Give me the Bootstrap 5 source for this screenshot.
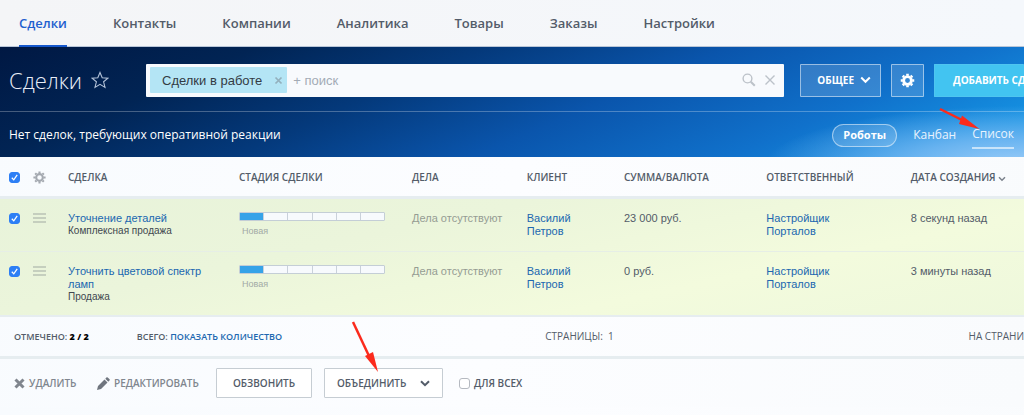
<!DOCTYPE html>
<html lang="ru">
<head>
<meta charset="utf-8">
<meta name="viewport" content="width=device-width, initial-scale=1">
<title>Сделки</title>
<link href="https://cdn.jsdelivr.net/npm/bootstrap@5.3.0/dist/css/bootstrap.min.css" rel="stylesheet">
<style>
:root { --os: "Open Sans", "Noto Sans", sans-serif; --ar: "Liberation Sans", Arial, sans-serif; --ink: #535c69; --blue: #2067b0; --edge: #e6edf0; }
body { font-family: var(--os); color: var(--ink); background: linear-gradient(100deg, #f8fbfe, #fcfdff 50%, #f9fbfd); overflow-x: hidden; }
a { text-decoration: none; }
.top-nav { height: 47px; gap: 46px; padding: 0 19px; background: linear-gradient(90deg, #f4f5f7, #f5f8fc); border-bottom: 1px solid #b9c6d8; flex-wrap: nowrap; }
.top-nav .nav-link { padding: 0; height: 47px; line-height: 46px; font-size: 13px; font-weight: 600; color: var(--ink); white-space: nowrap; }
.top-nav .nav-link.active { color: #1f60cf; border-bottom: 2px solid #1658cc; }
.hero { color: #fff; background:
  radial-gradient(ellipse 260px 60px at 100% 108%, #9dcdf8 0, rgba(125,188,244,.8) 45%, rgba(60,155,232,0) 100%),
  linear-gradient(157deg, #001843 0, #012454 20%, #04397b 38%, #0a55ac 57%, #1071cb 77%, #1592e2 93%, #1a97e6 100%); }
.hero-bar { height: 65px; padding: 2px 0 0 9px; border-bottom: 1px solid rgba(255,255,255,.27); overflow: hidden; }
.page-title { font-size: 22px; font-weight: 300; width: 137px; gap: 9px; margin: 0; color: #e8eef8; }
.search-box { height: 33px; margin-right: 16px; padding: 0 8px 0 4px; background: #f8fafd; border-radius: 1px; font: 13px var(--ar); }
.search-tag { height: 26px; padding: 0 4px 0 12px; gap: 12px; background: #b4e5f5; color: #333b44; border-radius: 1px; white-space: nowrap; }
.search-box input { font: 13px var(--ar); background: none; border: 0; outline: 0; min-width: 0; padding: 0 6px; color: var(--ink); }
.search-box input::placeholder { color: #a3abb5; opacity: 1; }
.bare { background: none; border: 0; padding: 0; line-height: 1; display: flex; color: inherit; }
.btn-glass { height: 33px; margin-right: 10px; padding: 0; border: 1px solid rgba(255,255,255,.5); border-radius: 1px; background: rgba(255,255,255,.16); color: #fff; font-size: 10px; font-weight: 700; }
.btn-add { height: 33px; width: 90px; padding: 0 0 0 18px; border: 1px solid #4fc5f0; border-right: 0; border-radius: 1px; background: #42c4f1; color: #fff; font-size: 10px; font-weight: 700; white-space: nowrap; overflow: hidden; text-align: left; }
.sub-bar { height: 45px; padding: 1px 10px 0 9px; font-size: 12px; }
.sub-bar a { color: #e9f3fd; }
.robots { height: 23px; width: 65px; padding: 0; border: 1px solid rgba(255,255,255,.5); border-radius: 12px; background: rgba(255,255,255,.14); color: #fff; font-size: 11px; font-weight: 700; }
.sub-bar .view-on { height: 27px; line-height: 24px; border-bottom: 2px solid rgba(255,255,255,.6); }
.pointer { position: absolute; pointer-events: none; }
.deals { table-layout: fixed; width: 100%; margin: 0; }
.deals th { height: 40px; padding: 2px 0 0; vertical-align: middle; font-size: 10px; line-height: 16px; font-weight: 600; white-space: nowrap; border-bottom: 3px solid var(--edge); }
.deals td { padding: 13px 0 11px; vertical-align: top; font: 11px/13px var(--ar); }
.deals tbody { background: linear-gradient(168deg, #e8f3da 0, #ebf5db 35%, #f3fbdd 70%, #eef8dc 100%); }
.deals tbody tr { border-bottom: 1px solid #e6eee6; }
.deals tbody tr:last-child { border-bottom: 2px solid var(--edge); }
.deals td a { color: var(--blue); }
.deals .row-one td { height: 54px; }
.deals .row-two td { height: 65px; }
.kind { font-size: 10px; line-height: 12px; color: #40474f; }
.deals .muted { color: #959c93; }
.tick { appearance: none; display: block; width: 11px; height: 11px; margin: 0; border-radius: 3px; border: 1px solid #b5b9c0; background-color: #fff; }
.deals td .tick { margin-top: 1px; }
.deals td .grip { display: block; margin-top: 1px; }
.tick:checked { border-color: #2d7ff5; background: #2d7ff5 url("data:image/svg+xml,%3Csvg xmlns='http://www.w3.org/2000/svg' viewBox='0 0 10 10'%3E%3Cpath d='M2 5.3 4.2 7.6 8 2.2' fill='none' stroke='white' stroke-width='1.4'/%3E%3C/svg%3E") center/100%; }
.check-cell { padding-left: 9px !important; }
.stages { width: 146px; height: 9px; border: 1px solid #c4ced6; border-radius: 1px; background: #f7fafd; }
.stages i { flex: 1; border-right: 1px solid #c9d1da; }
.stages i:first-child { background: #36a3e8; }
.stages i:last-child { border: 0; }
.stage-name { font-size: 9px; color: #a2aaa6; padding: 4px 0 0 3px; }
.totals { height: 42px; padding-left: 14px; font-size: 10px; border-bottom: 3px solid var(--edge); white-space: nowrap; overflow: hidden; }
.totals a { color: var(--blue); }
.totals .marked { flex: 0 0 52.6%; font-size: 9px; font-weight: 600; }
.actions { padding: 9px 14px; font-size: 10px; }
.actions .btn { height: 30px; padding: 0; border: 1px solid #c6cdd3; border-radius: 1px; color: var(--ink); font-size: 10px; font-weight: 600; background: #fff; }
.actions .bare { gap: 4px; align-items: center; color: #80868e; font-weight: 600; }
</style>
</head>
<body>
<nav class="nav top-nav">
  <a class="nav-link active" href="#">Сделки</a>
  <a class="nav-link" href="#">Контакты</a>
  <a class="nav-link" href="#">Компании</a>
  <a class="nav-link" href="#">Аналитика</a>
  <a class="nav-link" href="#">Товары</a>
  <a class="nav-link" href="#">Заказы</a>
  <a class="nav-link" href="#">Настройки</a>
</nav>

<header class="hero">
  <div class="hero-bar d-flex align-items-center">
    <h1 class="page-title d-flex align-items-center flex-shrink-0">Сделки
      <svg width="18" height="18" viewBox="0 0 18 18" fill="none" stroke="#b3c2d8" stroke-width="1.1"><path d="M9 1.5 11.2 6.8 16.9 7.2 12.6 10.8 14 16.4 9 13.4 4 16.4 5.4 10.8 1.1 7.2 6.8 6.8Z"/></svg>
    </h1>
    <div class="search-box d-flex align-items-center flex-grow-1">
      <span class="search-tag d-flex align-items-center">Сделки в работе
        <button class="bare" type="button" aria-label="Убрать фильтр"><svg width="9" height="9" viewBox="0 0 9 9" stroke="#93b0bd" stroke-width="1.7"><path d="m1.5 1.5 6 6m0-6-6 6"/></svg></button>
      </span>
      <input class="flex-grow-1" type="text" placeholder="+ поиск" aria-label="Поиск">
      <button class="bare me-2" type="button" aria-label="Найти"><svg width="14" height="14" viewBox="0 0 14 14" fill="none" stroke="#bcc2c9" stroke-width="1.4"><circle cx="5.5" cy="5.5" r="4.4"/><path d="m8.8 8.8 4 4" stroke-width="2"/></svg></button>
      <button class="bare" type="button" aria-label="Очистить"><svg width="12" height="12" viewBox="0 0 12 12" stroke="#bcc2c9" stroke-width="1.4"><path d="m1.5 1.5 9 9m0-9-9 9"/></svg></button>
    </div>
    <button class="btn btn-glass d-flex align-items-center justify-content-end flex-shrink-0" type="button" style="width:81px;padding-right:9px;gap:6px">ОБЩЕЕ
      <svg width="11" height="8" viewBox="0 0 11 8" fill="none" stroke="#fff" stroke-width="2"><path d="m1.2 1.5 4.3 4.3 4.3-4.3"/></svg></button>
    <button class="btn btn-glass d-flex align-items-center justify-content-center flex-shrink-0" type="button" style="width:33px" aria-label="Настройки">
      <svg width="15" height="15" viewBox="-8 -8 16 16"><circle r="4.1" fill="none" stroke="#fff" stroke-width="3"/><path d="M0-7.2V-5M0 7.2V5M-7.2 0H-5M7.2 0H5M-5.1-5.1-3.7-3.7M5.1-5.1 3.7-3.7M-5.1 5.1-3.7 3.7M5.1 5.1 3.7 3.7" stroke="#fff" stroke-width="2.8"/></svg></button>
    <button class="btn-add flex-shrink-0" type="button">ДОБАВИТЬ СД</button>
  </div>
  <div class="sub-bar d-flex align-items-center">
    <span class="me-auto">Нет сделок, требующих оперативной реакции</span>
    <button class="robots me-3" type="button">Роботы</button>
    <a class="me-3" href="#">Канбан</a>
    <a class="view-on position-relative" href="#">Список
      <svg class="pointer" style="left:-34px;top:-15px" width="44" height="24" viewBox="0 0 44 24"><path d="M2 2 24 13" stroke="#fb2a1c" stroke-width="2.4"/><path d="m24 8.5 17.5 13.5L21 17Z" fill="#fb2a1c"/></svg></a>
  </div>
</header>

<main>
<table class="deals">
  <colgroup><col style="width:33px"><col style="width:35px"><col style="width:16.7%"><col style="width:16.9%"><col style="width:11.2%"><col style="width:9.5%"><col style="width:13.9%"><col style="width:14.1%"><col></colgroup>
  <thead><tr>
    <th class="check-cell"><input class="tick" type="checkbox" checked aria-label="Выбрать все"></th>
    <th><svg class="d-block" width="13" height="13" viewBox="-8 -8 16 16"><circle r="4.1" fill="none" stroke="#a4a9b0" stroke-width="2.6"/><path d="M0-7.5V-5M0 7.5V5M-7.5 0H-5M7.5 0H5M-5.3-5.3-3.7-3.7M5.3-5.3 3.7-3.7M-5.3 5.3-3.7 3.7M5.3 5.3 3.7 3.7" stroke="#a4a9b0" stroke-width="2.6"/></svg></th>
    <th>СДЕЛКА</th><th>СТАДИЯ СДЕЛКИ</th><th>ДЕЛА</th><th>КЛИЕНТ</th><th>СУММА/ВАЛЮТА</th><th>ОТВЕТСТВЕННЫЙ</th>
    <th>ДАТА СОЗДАНИЯ <svg width="8" height="6" viewBox="0 0 8 6" fill="none" stroke="#7b828c" stroke-width="1.5"><path d="m1 1.2 3 3 3-3"/></svg></th>
  </tr></thead>
  <tbody>
    <tr class="row-one">
      <td class="check-cell"><input class="tick" type="checkbox" checked aria-label="Выбрать сделку"></td>
      <td><svg class="grip" width="13" height="10" viewBox="0 0 13 10" stroke="#b9c2b5" stroke-width="1.5"><path d="M0 1h13M0 5h13M0 9h13"/></svg></td>
      <td><a href="#">Уточнение деталей</a><div class="kind">Комплексная продажа</div></td>
      <td><div class="stages d-flex"><i></i><i></i><i></i><i></i><i></i><i></i></div><div class="stage-name">Новая</div></td>
      <td class="muted">Дела отсутствуют</td>
      <td><a href="#">Василий<br>Петров</a></td>
      <td>23 000 руб.</td>
      <td><a href="#">Настройщик<br>Порталов</a></td>
      <td>8 секунд назад</td>
    </tr>
    <tr class="row-two">
      <td class="check-cell"><input class="tick" type="checkbox" checked aria-label="Выбрать сделку"></td>
      <td><svg class="grip" width="13" height="10" viewBox="0 0 13 10" stroke="#b9c2b5" stroke-width="1.5"><path d="M0 1h13M0 5h13M0 9h13"/></svg></td>
      <td><a href="#">Уточнить цветовой спектр<br>ламп</a><div class="kind">Продажа</div></td>
      <td><div class="stages d-flex"><i></i><i></i><i></i><i></i><i></i><i></i></div><div class="stage-name">Новая</div></td>
      <td class="muted">Дела отсутствуют</td>
      <td><a href="#">Василий<br>Петров</a></td>
      <td>0 руб.</td>
      <td><a href="#">Настройщик<br>Порталов</a></td>
      <td>3 минуты назад</td>
    </tr>
  </tbody>
</table>

<div class="totals d-flex align-items-center">
  <div class="marked d-flex"><span class="me-5">ОТМЕЧЕНО: <b class="text-black">2 / 2</b></span>
  <span>ВСЕГО: <a href="#">ПОКАЗАТЬ КОЛИЧЕСТВО</a></span></div>
  <span class="me-auto">СТРАНИЦЫ: &nbsp;1</span>
  <span>НА СТРАНИ</span>
</div>

<div class="actions d-flex align-items-center">
  <button class="bare" type="button" style="width:83px"><svg width="11" height="11" viewBox="0 0 11 11" stroke="#80868e" stroke-width="3"><path d="m1.5 1.5 8 8m0-8-8 8"/></svg>УДАЛИТЬ</button>
  <button class="bare" type="button" style="width:119px"><svg width="13" height="13" viewBox="0 0 13 13" fill="#6f757e"><path d="M0 13 1 9 7.5 2.5 10.5 5.5 4 12ZM8.3 1.7 9.7.3Q10.2 0 10.7.4L12.6 2.3Q13 2.8 12.7 3.3L11.3 4.7Z"/></svg>РЕДАКТИРОВАТЬ</button>
  <button class="btn" type="button" style="width:96px">ОБЗВОНИТЬ</button>
  <button class="btn position-relative d-flex align-items-center justify-content-between" type="button" style="width:119px;margin-left:12px;padding:0 12px">ОБЪЕДИНИТЬ
    <svg width="10" height="7" viewBox="0 0 10 7" fill="none" stroke="#535c69" stroke-width="2"><path d="m1 1.2 4 4 4-4"/></svg>
    <svg class="pointer" style="left:26px;top:-49px" width="30" height="54" viewBox="0 0 30 54"><path d="M2 2 18 36" stroke="#fb2a1c" stroke-width="2.5"/><path d="m14 36 8-4 5 20Z" fill="#fb2a1c"/></svg></button>
  <input class="tick ms-3" id="all" type="checkbox"><label class="ms-1 fw-semibold" for="all">ДЛЯ ВСЕХ</label>
</div>
</main>
<script src="https://cdn.jsdelivr.net/npm/bootstrap@5.3.0/dist/js/bootstrap.bundle.min.js"></script>
</body>
</html>
